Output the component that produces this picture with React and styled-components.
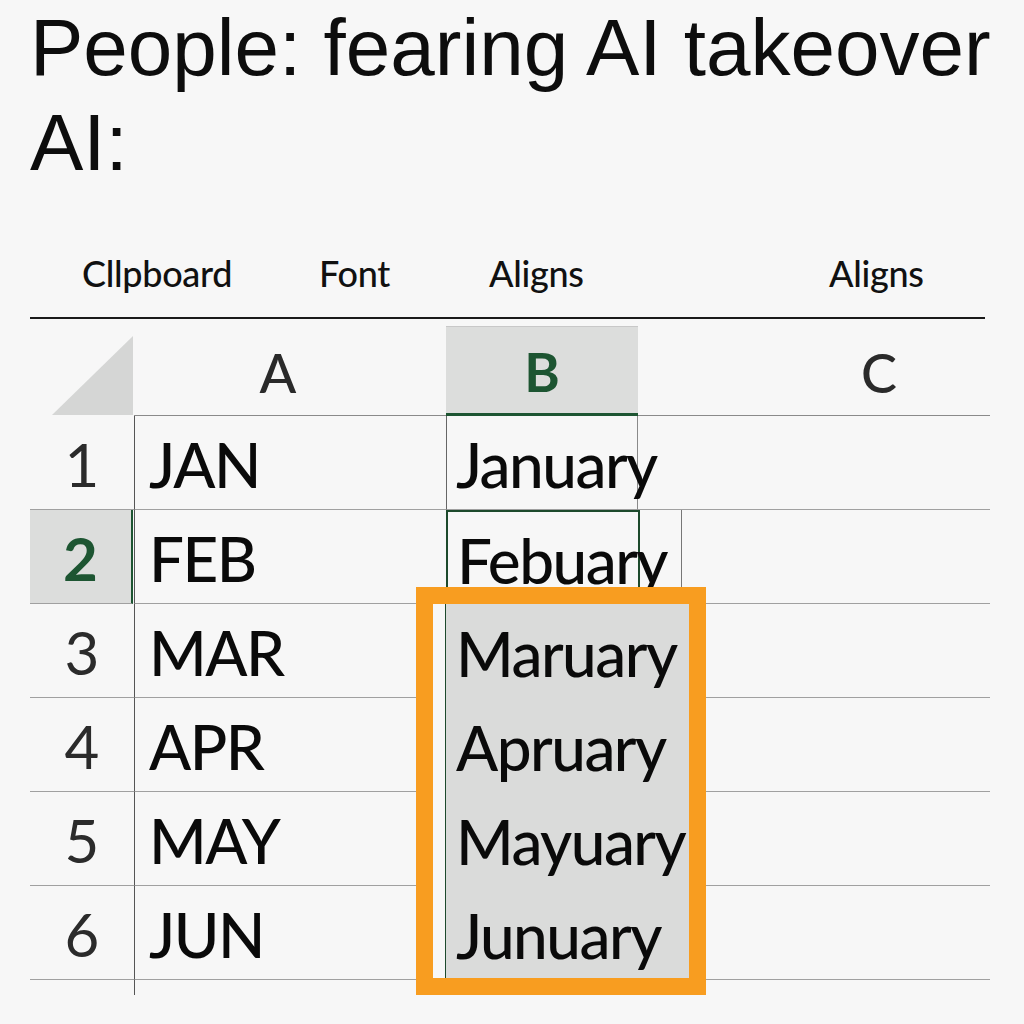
import React from 'react';
import styled, { createGlobalStyle } from 'styled-components';

const GlobalStyle = createGlobalStyle`
  * {
    box-sizing: border-box;
  }
  body {
    margin: 0;
    background: #f7f7f7;
    font-family: 'Lato', 'Noto Sans', sans-serif;
    color: #111;
  }
`;

const Page = styled.div`
  width: 1024px;
  height: 1024px;
  padding: 0 34px 0 30px;
  overflow: hidden;
`;

const Title = styled.h1`
  margin: 0;
  font-family: 'Liberation Sans', Arial, sans-serif;
  font-weight: 400;
  font-size: 80px;
  line-height: 95px;
  letter-spacing: 0;
  color: #0d0d0d;
  white-space: nowrap;
`;

const Ribbon = styled.div`
  display: grid;
  grid-template-columns: 237px 170px 340px 1fr;
  padding: 63px 0 0 52px;
  height: 129px;
  width: 955px;
  border-bottom: 2px solid #1a1a1a;
`;

const RibbonLabel = styled.span`
  font-size: 36px;
  font-weight: 500;
  line-height: 40px;
  letter-spacing: -0.3px;
  color: #111;
`;

const Sheet = styled.div`
  margin-top: 7px;
  display: grid;
  grid-template-columns: 104px 312px 192px 352px;
  grid-template-rows: 90px repeat(6, 94px) 15px;
  width: 960px;
`;

const Corner = styled.div`
  display: flex;
  justify-content: flex-end;
  align-items: flex-end;
  padding: 10px 1px 1px 0;
`;

const Triangle = styled.div`
  width: 81px;
  height: 79px;
  background: #d5d6d5;
  clip-path: polygon(100% 0, 100% 100%, 0 100%);
`;

const ColHead = styled.div`
  display: flex;
  align-items: center;
  justify-content: center;
  padding: 4px ${(p) => p.$padRight || 0}px 0 ${(p) => p.$padLeft || 0}px;
  font-size: 54px;
  line-height: 1;
  font-weight: 500;
  color: #2a2a2a;
  background: ${(p) => (p.$active ? '#dcdddc' : 'transparent')};
  border-bottom: ${(p) => (p.$active ? '3px solid #1d5532' : '1.5px solid #8a8a8a')};
  border-top: ${(p) => (p.$active ? '1px solid #c8c8c8' : 'none')};
  ${(p) => p.$active && 'color: #1d5532; font-weight: 700;'}
`;

const RowHead = styled.div`
  display: flex;
  align-items: center;
  justify-content: center;
  padding-top: 3px;
  font-size: 60px;
  line-height: 94px;
  color: ${(p) => (p.$active ? '#1d5532' : '#2b2b2b')};
  font-weight: ${(p) => (p.$active ? 700 : 400)};
  background: ${(p) => (p.$active ? '#dcdddc' : 'transparent')};
  border-right: ${(p) => (p.$active ? '2px solid #1d5532' : 'none')};
  border-bottom: 1.5px solid #a0a0a0;
  ${(p) => p.$active && 'margin-right: 1px;'}
`;

const Cell = styled.div`
  display: flex;
  align-items: center;
  padding: 3px 0 0 ${(p) => p.$pad || 0}px;
  font-size: 62px;
  font-weight: 500;
  letter-spacing: -1.5px;
  line-height: 94px;
  white-space: nowrap;
  overflow: visible;
  color: #0a0a0a;
  border-bottom: 1.5px solid #a0a0a0;
`;

const CellA = styled(Cell)`
  border-left: 1.5px solid #555;
`;

const CellB = styled(Cell)`
  position: relative;
  border-left: 1.5px solid #666;
  border-right: 1px solid #8a8a8a;
  ${(p) =>
    p.$selected &&
    `
    border: 2px solid #1d4a2c;
    border-bottom: none;
    margin-right: -2px;
  `}
`;

const CellC = styled(Cell)`
  ${(p) =>
    p.$mark &&
    `background: linear-gradient(to right, transparent 43px, #777 43px, #777 44px, transparent 44px);`}
`;

const Highlight = styled.div`
  grid-column: 3;
  grid-row: 4 / span 4;
  margin: -17px -68px -15px -30px;
  border: 17px solid #f89d20;
  background: #f7f7f7;
  padding-left: 12px;
  z-index: 2;
`;

const HighlightFill = styled.div`
  height: 100%;
  background: #dadbda;
  border-left: 1.5px solid #1d4a2c;
`;

const FillRow = styled.div`
  height: 94px;
  display: flex;
  align-items: center;
  padding: 3px 0 0 10px;
  font-size: 62px;
  font-weight: 500;
  letter-spacing: -1.5px;
  line-height: 94px;
  white-space: nowrap;
  color: #0a0a0a;
`;

const Stub = styled.div`
  grid-column: 2;
  grid-row: 8;
  border-left: 1.5px solid #555;
`;

const rows = [
  { n: 1, a: 'JAN', b: 'January' },
  { n: 2, a: 'FEB', b: 'Febuary' },
  { n: 3, a: 'MAR', b: 'Maruary' },
  { n: 4, a: 'APR', b: 'Apruary' },
  { n: 5, a: 'MAY', b: 'Mayuary' },
  { n: 6, a: 'JUN', b: 'Junuary' },
];

export default function App() {
  const filled = rows.filter((r) => r.n >= 3);

  return (
    <>
      <GlobalStyle />
      <Page>
        <Title>
          People: fearing AI takeover
          <br />
          AI:
        </Title>

        <Ribbon>
          <RibbonLabel>Cllpboard</RibbonLabel>
          <RibbonLabel>Font</RibbonLabel>
          <RibbonLabel>Aligns</RibbonLabel>
          <RibbonLabel>Aligns</RibbonLabel>
        </Ribbon>

        <Sheet>
          <Corner>
            <Triangle />
          </Corner>
          <ColHead $padRight={24}>A</ColHead>
          <ColHead $active>B</ColHead>
          <ColHead $padLeft={130}>C</ColHead>

          {rows.map((r) => (
            <React.Fragment key={r.n}>
              <RowHead $active={r.n === 2}>{r.n}</RowHead>
              <CellA $pad={14}>{r.a}</CellA>
              {r.n < 3 && (
                <CellB $pad={9} $selected={r.n === 2}>
                  {r.b}
                </CellB>
              )}
              <CellC $mark={r.n === 2} />
            </React.Fragment>
          ))}

          <Highlight>
            <HighlightFill>
              {filled.map((r) => (
                <FillRow key={r.n}>{r.b}</FillRow>
              ))}
            </HighlightFill>
          </Highlight>
          <Stub />
        </Sheet>
      </Page>
    </>
  );
}
